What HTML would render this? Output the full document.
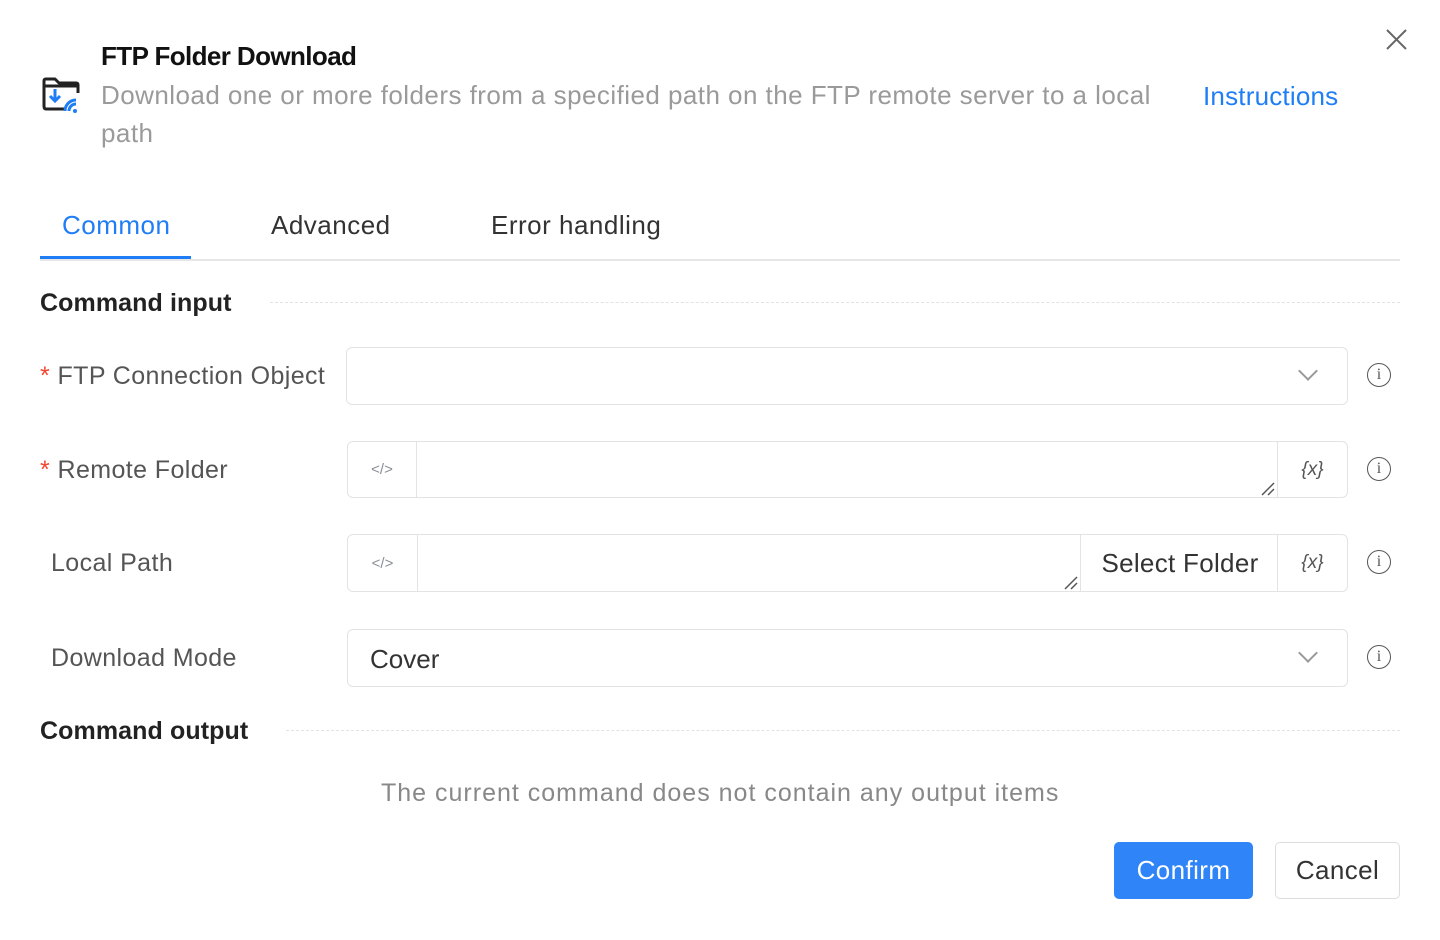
<!DOCTYPE html>
<html><head><meta charset="utf-8"><style>
*{box-sizing:border-box;margin:0;padding:0}
body{width:1440px;height:940px;background:#fff;font-family:"Liberation Sans",sans-serif;position:relative;overflow:hidden;color:#333}
.abs{position:absolute}
.title{left:101px;top:41px;font-size:26px;font-weight:bold;color:#111;letter-spacing:-0.6px}
.desc{left:101px;top:76px;width:1080px;font-size:26px;line-height:38px;color:#9a9a9a;letter-spacing:0.45px}
.instr{left:1203px;top:81px;font-size:26px;color:#1f7ef5;letter-spacing:0.2px}
.tab{top:210px;font-size:26px;color:#333;letter-spacing:0.5px}
.sec{font-size:25px;font-weight:bold;color:#222;letter-spacing:0.1px}
.dash{height:0;border-top:1px dashed #e3e3e3}
.lbl{font-size:25px;color:#555;letter-spacing:0.4px}
.star{color:#f5452f}
.box{border:1px solid #e3e3e3;border-radius:6px;background:#fff}
.cell{position:absolute;top:0;bottom:0;display:flex;align-items:center;justify-content:center;border-color:#e3e3e3;border-style:solid;border-width:0}
.info{width:24px;height:24px;border:1.6px solid #555;border-radius:50%;font-size:16px;font-family:"Liberation Serif",serif;display:flex;align-items:center;justify-content:center;color:#555}
.code{font-size:15px;color:#8a8f99}
.var{font-size:19px;color:#555;font-family:"Liberation Sans",sans-serif;font-style:italic}
.chev{width:14px;height:14px;border-right:2px solid #999;border-bottom:2px solid #999;transform:rotate(45deg);}
.btn{font-size:26px;display:flex;align-items:center;justify-content:center;border-radius:5px;letter-spacing:0.4px}
</style></head><body>
<svg class="abs" style="left:41px;top:76px" width="42" height="38" viewBox="0 0 42 38" fill="none">
<path d="M3 30 V5 Q3 3 5 3 H14 L18 7 H35 Q37 7 37 9 V17" stroke="#222" stroke-width="3" stroke-linejoin="round"/>
<path d="M3 30 Q3 33 5 33 H24" stroke="#222" stroke-width="3"/>
<path d="M3 10 H37" stroke="#222" stroke-width="3"/>
<path d="M14 13 V24 M9 20 L14 25 L19 20" stroke="#1f7ef5" stroke-width="3"/>
<path d="M28 35 a7 7 0 0 1 7 -7 M24 35 a11 11 0 0 1 11 -11" stroke="#1f7ef5" stroke-width="3"/>
<circle cx="34" cy="35" r="2" fill="#1f7ef5"/>
</svg>
<div class="abs title">FTP Folder Download</div>
<div class="abs desc">Download one or more folders from a specified path on the FTP remote server to a local path</div>
<div class="abs instr">Instructions</div>
<svg class="abs" style="left:1386px;top:29px" width="21" height="21"><path d="M1 1L20 20M20 1L1 20" stroke="#666" stroke-width="2"/></svg>

<div class="abs tab" style="left:62px;color:#1f7ef5">Common</div>
<div class="abs tab" style="left:271px">Advanced</div>
<div class="abs tab" style="left:491px">Error handling</div>
<div class="abs" style="left:40px;top:259px;width:1360px;height:2px;background:#e6e6e6"></div>
<div class="abs" style="left:40px;top:256px;width:151px;height:3px;background:#1f7ef5"></div>

<div class="abs sec" style="left:40px;top:289px">Command input</div>
<div class="abs dash" style="left:270px;top:302px;width:1130px"></div>

<div class="abs lbl" style="left:40px;top:362px"><span class="star">*</span> FTP Connection Object</div>
<div class="abs box" style="left:346px;top:347px;width:1002px;height:58px"><div class="chev abs" style="right:32px;top:16px"></div></div>
<div class="abs info" style="left:1367px;top:363px">i</div>

<div class="abs lbl" style="left:40px;top:456px"><span class="star">*</span> Remote Folder</div>
<div class="abs box" style="left:347px;top:441px;width:1001px;height:57px">
<div class="cell code" style="left:0;width:69px;border-right-width:1px">&lt;/&gt;</div>
<div class="cell var" style="right:0;width:70px;border-left-width:1px">{x}</div>
<svg class="abs" style="left:913px;top:40px" width="14" height="14"><path d="M1 13L13 1M7 13L13 7" stroke="#555" stroke-width="1.5"/></svg>
</div>
<div class="abs info" style="left:1367px;top:457px">i</div>

<div class="abs lbl" style="left:51px;top:549px">Local Path</div>
<div class="abs box" style="left:347px;top:534px;width:1001px;height:58px">
<div class="cell code" style="left:0;width:70px;border-right-width:1px">&lt;/&gt;</div>
<div class="cell" style="left:732px;width:199px;border-left-width:1px;font-size:26px;color:#333;letter-spacing:0.3px">Select Folder</div>
<div class="cell var" style="right:0;width:70px;border-left-width:1px">{x}</div>
<svg class="abs" style="left:716px;top:41px" width="14" height="14"><path d="M1 13L13 1M7 13L13 7" stroke="#555" stroke-width="1.5"/></svg>
</div>
<div class="abs info" style="left:1367px;top:550px">i</div>

<div class="abs lbl" style="left:51px;top:644px">Download Mode</div>
<div class="abs box" style="left:347px;top:629px;width:1001px;height:58px"><div class="abs" style="left:22px;top:14px;font-size:26px;color:#333">Cover</div><div class="chev abs" style="right:32px;top:16px"></div></div>
<div class="abs info" style="left:1367px;top:645px">i</div>

<div class="abs sec" style="left:40px;top:717px">Command output</div>
<div class="abs dash" style="left:286px;top:730px;width:1114px"></div>
<div class="abs" style="left:381px;top:779px;font-size:25px;color:#888;letter-spacing:1px">The current command does not contain any output items</div>

<div class="abs btn" style="left:1114px;top:842px;width:139px;height:57px;background:#2f85f7;color:#fff">Confirm</div>
<div class="abs btn" style="left:1275px;top:842px;width:125px;height:57px;border:1px solid #ddd;color:#333">Cancel</div>
</body></html>
